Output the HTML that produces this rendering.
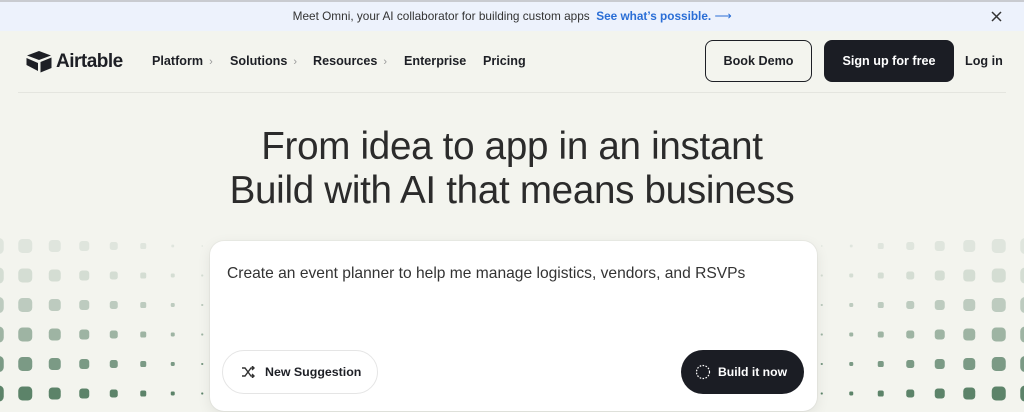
<!DOCTYPE html>
<html><head><meta charset="utf-8"><style>
*{margin:0;padding:0;box-sizing:border-box}
body{width:1024px;height:412px;overflow:hidden;background:#f3f4ee;font-family:"Liberation Sans",Arial,sans-serif;color:#1d1f25;position:relative}
.banner{position:absolute;top:0;left:0;width:1024px;height:31px;background:#edf2fc;border-top:2px solid #c9cbd0;font-size:11.8px;color:#333;text-align:center;line-height:29px}
.banner a{color:#2a6ed6;text-decoration:none;font-weight:bold}
.close{position:absolute;right:22px;top:9px}
.nav{position:absolute;top:31px;left:0;width:1024px;height:61px}
.line{position:absolute;top:92px;left:18px;right:18px;height:1px;background:#e4e5df}
.logo{position:absolute;left:26px;top:20px}
.brand{position:absolute;left:56px;top:20px;font-size:19px;font-weight:bold;letter-spacing:-0.5px}
.menu{position:absolute;top:23px;font-size:12.6px;font-weight:bold;color:#1d1f25}
.menu span.c{color:#999;font-weight:normal;font-size:11px;margin-left:6px}
.btn{position:absolute;top:9px;height:42px;border-radius:8px;font-size:12.6px;font-weight:bold;text-align:center;line-height:40px}
h1{position:absolute;top:125px;left:0;width:1024px;text-align:center;font-weight:normal;font-size:38.6px;line-height:44px;color:#2b2b2b;letter-spacing:-0.3px}
.card{position:absolute;left:210px;top:241px;width:607px;height:170px;background:#fff;border-radius:14px;box-shadow:0 4px 14px rgba(0,0,0,.08),0 0 0 1px rgba(0,0,0,.03)}
.prompt{position:absolute;left:17px;top:24px;font-size:15.6px;color:#333}
.ns{position:absolute;left:12px;top:109px;width:156px;height:44px;border:1px solid #e5e5e5;border-radius:22px;font-size:12.4px;font-weight:bold;line-height:42px;padding-left:42px}
.bn{position:absolute;left:471px;top:109px;width:123px;height:44px;background:#1b1d24;border-radius:22px;color:#fff;font-size:12.2px;font-weight:bold;line-height:44px;padding-left:37px}
</style></head><body>
<svg id="dots" width="1024" height="412" style="position:absolute;left:0;top:0"></svg>
<div class="banner">Meet Omni, your AI collaborator for building custom apps&nbsp; <a>See what’s possible. <span style="font-weight:normal">⟶</span></a><svg class="close" width="11" height="11" viewBox="0 0 11 11" stroke="#333" stroke-width="1.5"><path d="M1 1L10 10M10 1L1 10"/></svg></div>
<div class="nav">
<svg class="logo" width="26" height="22" viewBox="0 0 26 22"><path d="M13 0 L25 4.5 L13 9 L1 4.5Z" fill="#1d1f25"/><path d="M14.5 11 L25.5 6.5 V17 L14.5 21.5Z" fill="#1d1f25"/><path d="M0.5 7 L12 12 V20 L0.5 14Z" fill="#1d1f25"/></svg>
<div class="brand">Airtable</div>
<div class="menu" style="left:152px">Platform<span class="c">›</span></div>
<div class="menu" style="left:230px">Solutions<span class="c">›</span></div>
<div class="menu" style="left:313px">Resources<span class="c">›</span></div>
<div class="menu" style="left:404px">Enterprise</div>
<div class="menu" style="left:483px">Pricing</div>
<div class="btn" style="left:705px;width:107px;border:1px solid #1d1f25">Book Demo</div>
<div class="btn" style="left:824px;width:130px;background:#1b1d24;color:#fff;line-height:42px">Sign up for free</div>
<div class="menu" style="left:965px">Log in</div>
</div>
<div class="line"></div>
<h1>From idea to app in an instant<br>Build with AI that means business</h1>
<div class="card">
<div class="prompt">Create an event planner to help me manage logistics, vendors, and RSVPs</div>
<div class="ns"><svg style="position:absolute;left:18px;top:15px" width="14" height="12" viewBox="0 0 14 12" fill="none" stroke="#333" stroke-width="1.4"><path d="M1 2h3l6 8h3M1 10h3l6-8h3M11 0l2 2-2 2M11 8l2 2-2 2"/></svg>New Suggestion</div>
<div class="bn"><svg style="position:absolute;left:14px;top:14px" width="16" height="16" viewBox="0 0 16 16" fill="none" stroke="#fff" stroke-width="1.2" stroke-dasharray="1.6 1.4"><circle cx="8" cy="8" r="6.5"/></svg>Build it now</div>
</div>
<script>
var s=document.getElementById('dots'),h='';
var rows=[246,275.5,305,334.5,364,393.5];
var alph=[0.08,0.15,0.3,0.5,0.72,0.92];
for(var r=0;r<6;r++){for(var k=9;k<18;k++){for(var sd=-1;sd<=1;sd+=2){
var x=512+sd*(k+0.5)*29.5;if(x<-20||x>1044)continue;
var sz=Math.max(1.5,2+(k-10)*2); if(k==9)sz=1.2;
if(r==0&&k<12)sz*=0.7;
var a=alph[r];
var light=[236,238,232],dark=[79,122,94];
var c=light.map(function(v,i){return Math.round(v+(dark[i]-v)*a)});
h+='<rect x="'+(x-sz/2)+'" y="'+(rows[r]-sz/2)+'" width="'+sz+'" height="'+sz+'" rx="'+(sz*0.3)+'" fill="rgb('+c+')"/>';
}}}
s.innerHTML=h;
</script>
</body></html>
